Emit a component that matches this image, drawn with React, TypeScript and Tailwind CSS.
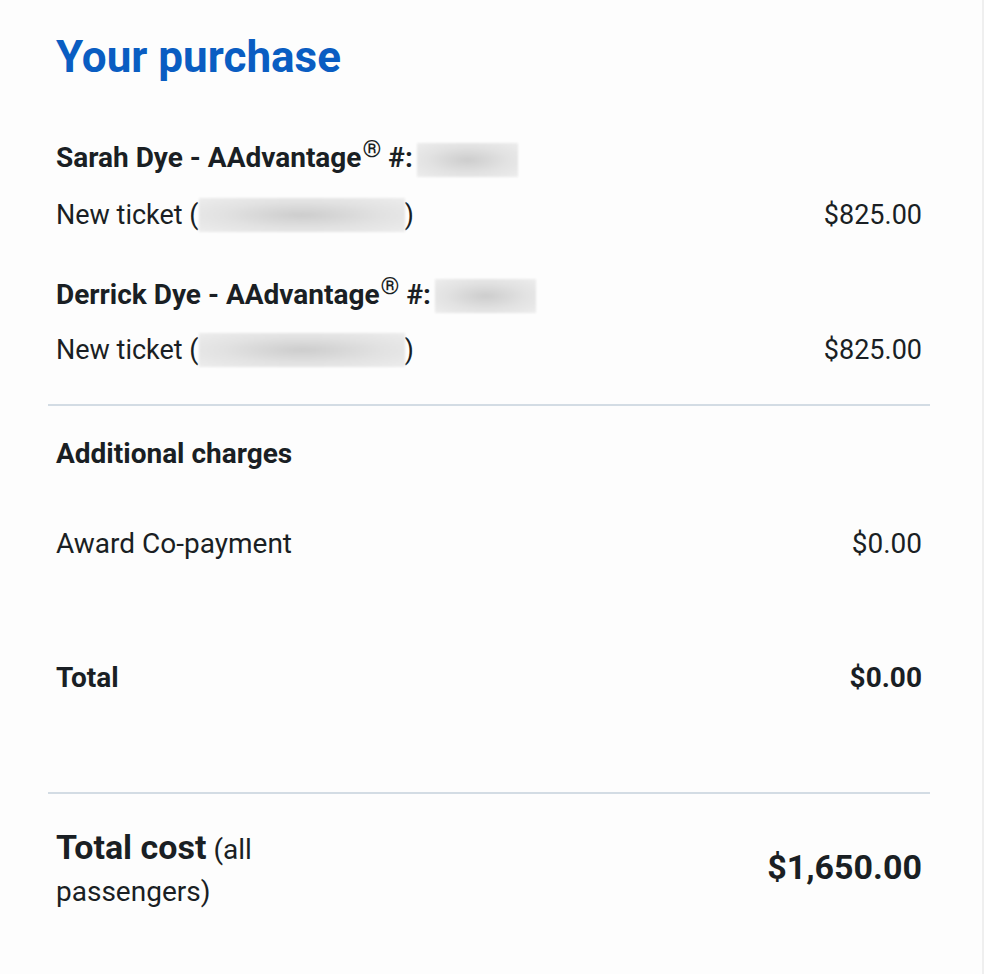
const Blur = ({ w }: { w: string }) => (
    <span
        className={`inline-block align-middle ${w} h-[34px] bg-[radial-gradient(ellipse_at_center,#cdcdcd_0%,#e2e2e2_55%,#ededed_100%)] blur-[1px]`}
    />
);

const Row = ({ left, right, bold = false, className = "" }: { left: React.ReactNode; right?: string; bold?: boolean; className?: string }) => (
    <div className={`flex items-center justify-between px-2 leading-[36px] ${bold ? "font-bold" : ""} ${className}`}>
        <div>{left}</div>
        {right && <div>{right}</div>}
    </div>
);

const Passenger = ({ name, first }: { name: string; first?: boolean }) => (
    <>
        <Row
            bold
            className={first ? "mt-[57px] text-[28px]" : "mt-[44px] text-[28px]"}
            left={
                <span className="flex items-center">
                    {name} - AAdvantage<sup className="text-[24px] font-normal -top-[9px] ml-[1px]">®</sup>&nbsp;#:
                    <span className="ml-[4px]"><Blur w="w-[101px]" /></span>
                </span>
            }
        />
        <Row
            className={first ? "mt-[20px] text-[27px]" : "mt-[19px] text-[27px]"}
            left={
                <span className="flex items-center">
                    New ticket (<Blur w="w-[206px]" />)
                </span>
            }
            right="$825.00"
        />
    </>
);

const App = () => {
    return (
        <div className="min-h-[974px] w-full bg-white" style={{ fontFamily: "Roboto, 'Liberation Sans', sans-serif" }}>
            <div className="min-h-[974px] w-[984px] border-r-2 border-[#efefef] bg-[#fdfdfd]">
                <div className="ml-[48px] w-[882px] pt-[31px] text-[#1a1f24]">
                    {/* Heading */}
                    <h1 className="px-2 text-[44px] leading-[52px] font-bold text-[#0a5dc2]">Your purchase</h1>

                    {/* Passengers */}
                    <Passenger name="Sarah Dye" first />
                    <Passenger name="Derrick Dye" />

                    <div className="mt-[36px] h-[2px] bg-[#d3dce4]" />

                    {/* Additional charges */}
                    <Row bold className="mt-[30px] text-[28px]" left="Additional charges" />
                    <Row className="mt-[54px] text-[28px]" left="Award Co-payment" right="$0.00" />
                    <Row bold className="mt-[98px] text-[28px]" left="Total" right="$0.00" />

                    <div className="mt-[96px] h-[2px] bg-[#d3dce4]" />

                    {/* Total cost */}
                    <div className="mt-[32px] flex items-center justify-between px-2">
                        <div className="text-[28px]">
                            <div className="flex items-baseline gap-[7px] leading-[43px]">
                                <span className="text-[34px] font-bold">Total cost</span>
                                <span>(all</span>
                            </div>
                            <div className="leading-[41px]">passengers)</div>
                        </div>
                        <div className="pb-[4px] text-[34px] font-bold">$1,650.00</div>
                    </div>
                </div>
            </div>
        </div>
    );
};

export default App;
